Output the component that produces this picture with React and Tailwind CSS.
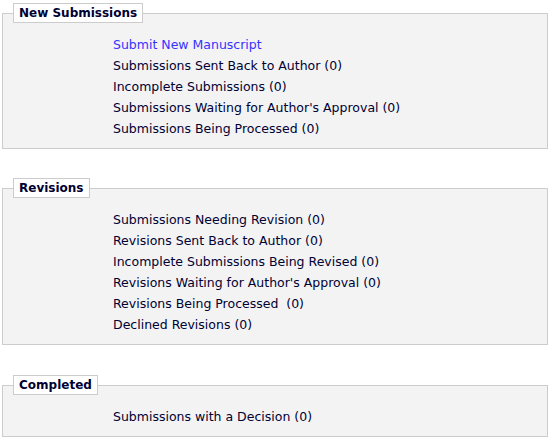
import React from "react";

const sections = [
  {
    title: "New Submissions",
    space: "",
    items: [
      { label: "Submit New Manuscript", link: true },
      { label: "Submissions Sent Back to Author (0)" },
      { label: "Incomplete Submissions (0)" },
      { label: "Submissions Waiting for Author's Approval (0)" },
      { label: "Submissions Being Processed (0)" },
    ],
  },
  {
    title: "Revisions",
    space: "mt-[29px]",
    items: [
      { label: "Submissions Needing Revision (0)" },
      { label: "Revisions Sent Back to Author (0)" },
      { label: "Incomplete Submissions Being Revised (0)" },
      { label: "Revisions Waiting for Author's Approval (0)" },
      { label: "Revisions Being Processed\u00a0 (0)" },
      { label: "Declined Revisions (0)" },
    ],
  },
  {
    title: "Completed",
    space: "mt-[30px]",
    items: [{ label: "Submissions with a Decision (0)" }],
  },
];

const Section = ({ title, items, space }) => (
  <fieldset
    className={`border border-[#cccccc] bg-[#f3f3f3] px-[10px] pt-[11px] pb-[9px] ${space}`}
  >
    <legend className="border border-[#cccccc] bg-white px-[5px] text-[12px] leading-[18px] font-bold text-[#000033]">
      {title}
    </legend>
    <ul className="pl-[100px]">
      {items.map((item) => (
        <li
          key={item.label}
          className={`text-[12.5px] leading-[21px] ${
            item.link ? "text-[#3333ff]" : "text-[#000033]"
          }`}
        >
          {item.link ? <a href="#">{item.label}</a> : item.label}
        </li>
      ))}
    </ul>
  </fieldset>
);

export default function App() {
  return (
    <div
      className="bg-white w-[558px] h-[443px] pt-[3px] pl-[2px] pr-[10px] flex flex-col"
      style={{ fontFamily: '"DejaVu Sans", Verdana, sans-serif' }}
    >
      {sections.map((s) => (
        <Section key={s.title} title={s.title} items={s.items} space={s.space} />
      ))}
    </div>
  );
}
